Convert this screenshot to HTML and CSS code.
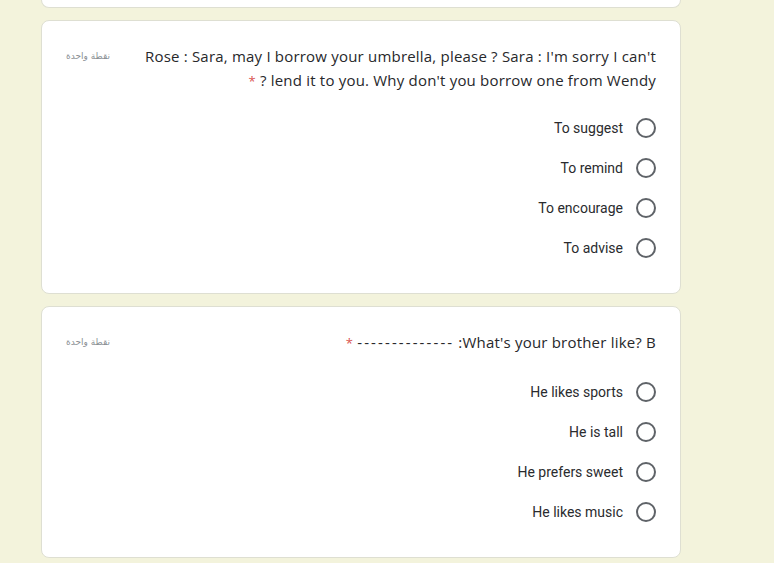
FILE: index.html
```html
<!DOCTYPE html>
<html lang="ar">
<head>
<meta charset="utf-8">
<link rel="stylesheet" href="styles.css">
</head>
<body>
<div class="page">
  <div class="card stub"></div>

  <div class="card">
    <div class="head">
      <div class="points">نقطة واحدة</div>
      <div class="question" dir="rtl">Rose : Sara, may I borrow your umbrella, please ? Sara : I'm sorry I can't lend it to you. Why don't you borrow one from Wendy ? <span class="req">*</span></div>
    </div>
    <div class="options">
      <label class="option"><span class="otext">To suggest</span><span class="radio"></span></label>
      <label class="option"><span class="otext">To remind</span><span class="radio"></span></label>
      <label class="option"><span class="otext">To encourage</span><span class="radio"></span></label>
      <label class="option"><span class="otext">To advise</span><span class="radio"></span></label>
    </div>
  </div>

  <div class="card last">
    <div class="head">
      <div class="points">نقطة واحدة</div>
      <div class="question" dir="rtl">What's your brother like? B: <span class="dashes">--------------</span> <span class="req">*</span></div>
    </div>
    <div class="options">
      <label class="option"><span class="otext">He likes sports</span><span class="radio"></span></label>
      <label class="option"><span class="otext">He is tall</span><span class="radio"></span></label>
      <label class="option"><span class="otext">He prefers sweet</span><span class="radio"></span></label>
      <label class="option"><span class="otext">He likes music</span><span class="radio"></span></label>
    </div>
  </div>
</div>
</body>
</html>
```

FILE: styles.css
```css
html, body {
  margin: 0;
  padding: 0;
  background: #f3f3dc;
}
body {
  font-family: Roboto, "Liberation Sans", sans-serif;
  color: #202124;
}
.page {
  width: 640px;
  margin-left: 41px;
  display: flex;
  flex-direction: column;
  gap: 12px;
}
.card {
  background: #fff;
  border: 1px solid #dedfd2;
  border-radius: 8px;
  padding: 23px 24px 25px 24px;
  box-sizing: border-box;
}
.card.stub {
  height: 8px;
  padding: 0;
  border-top: none;
  border-radius: 0 0 8px 8px;
}
.head {
  display: flex;
  align-items: flex-start;
  gap: 24px;
}
.points {
  flex: none;
  width: 44px;
  font-family: "DejaVu Sans", "Noto Sans", sans-serif;
  font-size: 9px;
  line-height: 24px;
  color: #8a8f94;
  text-align: left;
}
.question {
  flex: 1;
  font-family: "Open Sans", Roboto, sans-serif;
  font-size: 15px;
  line-height: 24px;
  letter-spacing: 0.2px;
  color: #27282b;
  text-align: right;
}
.dashes {
  letter-spacing: 2.1px;
}
.req {
  color: #d9534f;
  font-size: 13px;
}
.options {
  margin-top: 15px;
  display: flex;
  flex-direction: column;
  align-items: flex-end;
}
.card.last .options {
  margin-top: 17px;
}
.option {
  height: 40px;
  display: flex;
  align-items: center;
  gap: 13px;
}
.otext {
  font-size: 14px;
  color: #2a2b2e;
}
.radio {
  width: 20px;
  height: 20px;
  border: 2px solid #5f6368;
  border-radius: 50%;
  box-sizing: border-box;
}
```
